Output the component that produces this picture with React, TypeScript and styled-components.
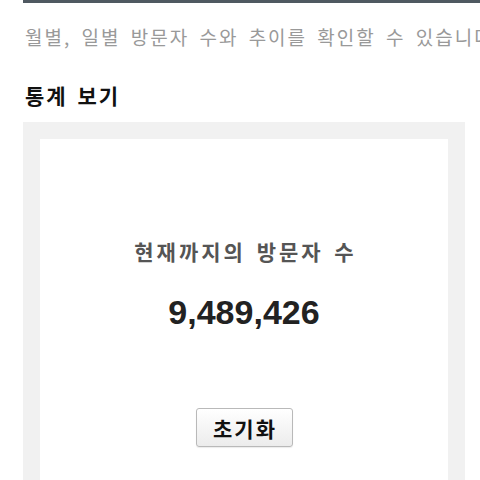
import React from "react";
import styled, { createGlobalStyle } from "styled-components";

const Global = createGlobalStyle`
  html, body {
    margin: 0;
    padding: 0;
    background: #ffffff;
    overflow: hidden;
  }
  body {
    font-family: "Noto Sans CJK KR", "Noto Sans", sans-serif;
  }
`;

const Page = styled.div`
  width: 520px;
  padding-left: 23px;
  box-sizing: border-box;
`;

const TopBar = styled.div`
  height: 3px;
  background: #4f5961;
`;

const Description = styled.p`
  margin: 21px 0 0 2px;
  font-size: 19px;
  line-height: 26px;
  color: #999999;
  white-space: nowrap;
  letter-spacing: 2px;
  word-spacing: 4px;
`;

const Heading = styled.h2`
  margin: 32px 0 0 2px;
  font-size: 21px;
  line-height: 26px;
  font-weight: 700;
  color: #111111;
  letter-spacing: 2px;
  word-spacing: 3px;
`;

const Panel = styled.section`
  width: 442px;
  margin-top: 14px;
  padding: 17px 17px 0;
  box-sizing: border-box;
  background: #f1f1f1;
`;

const Card = styled.div`
  background: #ffffff;
  height: 400px;
  padding-top: 97px;
  box-sizing: border-box;
  display: flex;
  flex-direction: column;
  align-items: center;
`;

const Label = styled.div`
  font-size: 21px;
  line-height: 30px;
  font-weight: 700;
  color: #555555;
  letter-spacing: 3px;
  word-spacing: 3px;
  padding-left: 3px;
`;

const Count = styled.div`
  margin-top: 26px;
  font-family: "Liberation Sans", Arial, sans-serif;
  font-size: 34px;
  line-height: 40px;
  font-weight: 700;
  color: #222222;
`;

const ResetButton = styled.button`
  margin-top: 76px;
  width: 97px;
  height: 39px;
  border: 1px solid #b9b9b9;
  border-radius: 3px;
  background: linear-gradient(#ffffff, #ececec);
  box-shadow: 0 1px 1px rgba(0, 0, 0, 0.08);
  font-family: "Noto Sans CJK KR", "Noto Sans", sans-serif;
  font-size: 21px;
  font-weight: 700;
  color: #111111;
  letter-spacing: 2px;
  padding: 0 0 0 2px;
  cursor: pointer;
`;

export default function App() {
  return (
    <>
      <Global />
      <Page>
        <TopBar />
        <Description>월별, 일별 방문자 수와 추이를 확인할 수 있습니다.</Description>
        <Heading>통계 보기</Heading>
        <Panel>
          <Card>
            <Label>현재까지의 방문자 수</Label>
            <Count>9,489,426</Count>
            <ResetButton type="button">초기화</ResetButton>
          </Card>
        </Panel>
      </Page>
    </>
  );
}
